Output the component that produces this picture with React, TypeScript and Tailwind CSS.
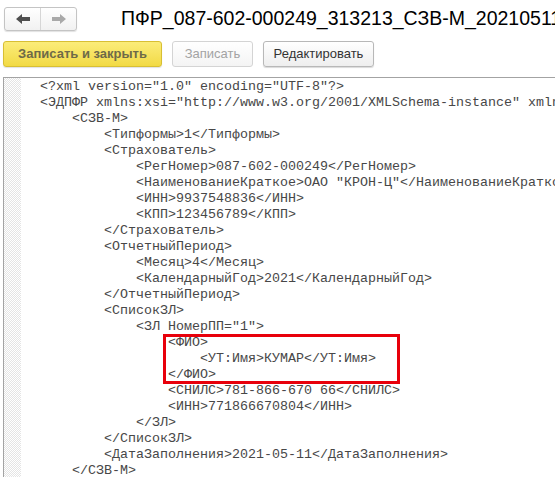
const lines: [number, string][] = [
    [0, '<?xml version="1.0" encoding="UTF-8"?>'],
    [0, '<ЭДПФР xmlns:xsi="http://www.w3.org/2001/XMLSchema-instance" xmlns:xsd="http://www.w3.org/2001/XMLSchema"'],
    [1, '<СЗВ-М>'],
    [2, '<Типформы>1</Типформы>'],
    [2, '<Страхователь>'],
    [3, '<РегНомер>087-602-000249</РегНомер>'],
    [3, '<НаименованиеКраткое>ОАО "КРОН-Ц"</НаименованиеКраткое>'],
    [3, '<ИНН>9937548836</ИНН>'],
    [3, '<КПП>123456789</КПП>'],
    [2, '</Страхователь>'],
    [2, '<ОтчетныйПериод>'],
    [3, '<Месяц>4</Месяц>'],
    [3, '<КалендарныйГод>2021</КалендарныйГод>'],
    [2, '</ОтчетныйПериод>'],
    [2, '<СписокЗЛ>'],
    [3, '<ЗЛ НомерПП="1">'],
    [4, '<ФИО>'],
    [5, '<УТ:Имя>КУМАР</УТ:Имя>'],
    [4, '</ФИО>'],
    [4, '<СНИЛС>781-866-670 66</СНИЛС>'],
    [4, '<ИНН>771866670804</ИНН>'],
    [3, '</ЗЛ>'],
    [2, '</СписокЗЛ>'],
    [2, '<ДатаЗаполнения>2021-05-11</ДатаЗаполнения>'],
    [1, '</СЗВ-М>'],
    [0, '</ЭДПФР>'],
];

function Arrow({ dir, color }: { dir: "left" | "right"; color: string }) {
    return (
        <svg width="16" height="12" viewBox="0 0 16 12" className={dir === "right" ? "rotate-180" : ""}>
            <path d="M1 6 L7 1 L7 4 L15 4 L15 8 L7 8 L7 11 Z" fill={color} />
        </svg>
    );
}

export default function App() {
    return (
        <div className="w-[555px] h-[477px] overflow-hidden bg-white relative font-['Liberation_Sans',Arial,sans-serif]">
            {/* header */}
            <div className="flex items-center h-[38px] pl-1">
                <div className="flex shrink-0 h-[24px] w-[73px] border border-[#c4c4c4] rounded-[3px] bg-gradient-to-b from-white to-[#f1f1f1] shadow-[0_1px_1px_rgba(0,0,0,0.12)]">
                    <div className="flex-1 flex items-center justify-center border-r border-[#d6d6d6]">
                        <Arrow dir="left" color="#4f4f4f" />
                    </div>
                    <div className="flex-1 flex items-center justify-center">
                        <Arrow dir="right" color="#a9a9a9" />
                    </div>
                </div>
                <div className="ml-[44px] shrink-0 text-[19.5px] text-black whitespace-nowrap leading-none">
                    ПФР_087-602-000249_313213_СЗВ-М_20210511
                </div>
            </div>

            {/* buttons */}
            <div className="flex items-center gap-[10px] pl-[3px] mt-[3px]">
                <div className="h-[26px] w-[159px] flex items-center justify-center rounded-[3px] border border-[#d8bf33] bg-gradient-to-b from-[#fbec78] to-[#f2da43] text-[13px] font-bold text-[#6e6a48] shadow-[0_1px_1px_rgba(0,0,0,0.12)]">
                    Записать и закрыть
                </div>
                <div className="h-[26px] w-[81px] flex items-center justify-center rounded-[3px] border border-[#d4d4d4] bg-gradient-to-b from-white to-[#f4f4f4] text-[13px] text-[#a3a3a3]">
                    Записать
                </div>
                <div className="h-[26px] w-[111px] flex items-center justify-center rounded-[3px] border border-[#b8b8b8] bg-gradient-to-b from-white to-[#eeeeee] text-[13px] text-[#333] shadow-[0_1px_1px_rgba(0,0,0,0.15)]">
                    Редактировать
                </div>
            </div>

            {/* editor */}
            <div className="mt-[10px] ml-[3px] flex border-t border-l border-[#a3a3a3] h-[400px] relative">
                <div className="w-[17px] shrink-0 bg-[repeating-conic-gradient(#e4e4e4_0_25%,#ffffff_0_50%)] bg-[length:2px_2px]"></div>
                <div className="pl-[19px] pt-[1px] font-['Liberation_Mono','Courier_New',monospace] text-[13.33px] leading-[16px] text-[#474747] whitespace-pre">
                    {lines.map(([lvl, text], i) => (
                        <div key={i} style={{ paddingLeft: lvl * 32 }}>
                            {text}
                        </div>
                    ))}
                </div>
                <div className="absolute left-[159px] top-[256px] w-[237px] h-[50px] border-[3px] border-[#e8000b]"></div>
            </div>
        </div>
    );
}
